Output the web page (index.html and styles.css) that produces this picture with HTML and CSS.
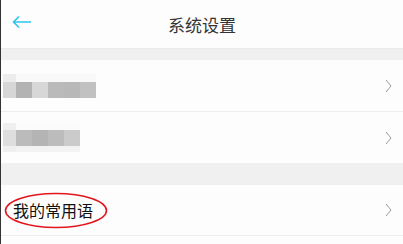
FILE: index.html
```html
<!DOCTYPE html>
<html lang="zh-CN">
<head>
    <meta charset="UTF-8">
    <meta name="viewport" content="width=device-width, initial-scale=1.0">
    <title>系统设置</title>
    <link rel="stylesheet" href="styles.css">
</head>
<body>
    <div class="screen">
        <!-- Top bar -->
        <div class="topbar">
            <svg class="back" width="20" height="14" viewBox="0 0 20 14">
                <path d="M19 7H1.5M7 1.5L1.5 7L7 12.5" fill="none" stroke="#2fc5ea" stroke-width="1.6"/>
            </svg>
            <div class="title">系统设置</div>
        </div>

        <div class="band band-top"></div>

        <!-- Settings group -->
        <div class="row">
            <div class="mosaic">
                <div class="strip m1-top"></div>
                <div class="strip m1-mid"></div>
            </div>
            <svg class="chevron" width="7" height="14" viewBox="0 0 7 14">
                <polyline points="1,1 6,7 1,13" fill="none" stroke="#9a9a9a" stroke-width="1"/>
            </svg>
        </div>
        <div class="sep"></div>
        <div class="row">
            <div class="mosaic">
                <div class="strip m2-top"></div>
                <div class="strip m2-mid"></div>
                <div class="strip m2-bot"></div>
            </div>
            <svg class="chevron" width="7" height="14" viewBox="0 0 7 14">
                <polyline points="1,1 6,7 1,13" fill="none" stroke="#9a9a9a" stroke-width="1"/>
            </svg>
        </div>

        <div class="band band-mid"></div>

        <div class="row row-phrases">
            <span class="label">我的常用语</span>
            <svg class="circle" width="104" height="37" viewBox="0 0 104 37">
                <ellipse cx="52" cy="18.5" rx="50.5" ry="17" fill="none" stroke="#e3161f" stroke-width="1.6"/>
            </svg>
            <svg class="chevron" width="7" height="14" viewBox="0 0 7 14">
                <polyline points="1,1 6,7 1,13" fill="none" stroke="#9a9a9a" stroke-width="1"/>
            </svg>
        </div>
        <div class="sep"></div>
    </div>
</body>
</html>
```

FILE: styles.css
```css
/* General */
body {
    margin: 0;
    font-family: "Noto Sans CJK SC", "Noto Sans", sans-serif;
    background: #fdfdfd;
}

.screen {
    width: 402px;
    height: 244px;
    border-left: 1px solid #333;
    background: #fdfdfd;
    overflow: hidden;
}

/* Top bar */
.topbar {
    height: 48px;
    position: relative;
    display: flex;
    align-items: center;
    justify-content: center;
    background: #fdfdfd;
}

.back {
    position: absolute;
    left: 11px;
    top: 15px;
}

.title {
    font-size: 17px;
    color: #333;
    letter-spacing: 0;
}

/* Gray bands */
.band {
    background: #f0f0f0;
}

.band-top {
    height: 12px;
    border-top: 1px solid #e8ebee;
    box-sizing: border-box;
}

.band-mid {
    height: 22px;
}

.sep {
    height: 1px;
    background: #eeeeee;
}

/* Rows */
.row {
    height: 51px;
    display: flex;
    align-items: center;
    justify-content: space-between;
    padding: 0 11px 0 2px;
    position: relative;
}

.row-phrases {
    height: 50px;
}

/* Blurred text */
.mosaic {
    display: flex;
    flex-direction: column;
}

.strip {
    height: 16px;
}

.m1-top {
    height: 8px;
    width: 93px;
    background: linear-gradient(to right, #ececec 0 13px, #f9f9f9 13px 100%);
}

.m1-mid {
    width: 93px;
    background: linear-gradient(to right,
        #d6d6d6 0 13px, #b3b3b3 13px 29px, #d7d7d7 29px 45px,
        #bababa 45px 61px, #b8b8b8 61px 77px, #c1c1c1 77px 93px);
}

.m2-top {
    height: 7px;
    width: 77px;
    background: linear-gradient(to right, #efefef 0 13px, #fbfbfb 13px 100%);
}

.m2-mid {
    width: 77px;
    background: linear-gradient(to right,
        #dedede 0 13px, #bbbbbb 13px 29px, #b4b4b4 29px 45px,
        #bcbcbc 45px 61px, #cbcbcb 61px 77px);
}

.m2-bot {
    height: 6px;
    width: 77px;
    background: linear-gradient(to right, #efefef 0 13px, #f3f3f3 13px 100%);
}

/* Common phrases row */
.label {
    font-size: 16px;
    color: #111;
    margin-left: 10px;
}

.circle {
    position: absolute;
    left: 3px;
    top: 7px;
}

.chevron {
    display: block;
}
```
